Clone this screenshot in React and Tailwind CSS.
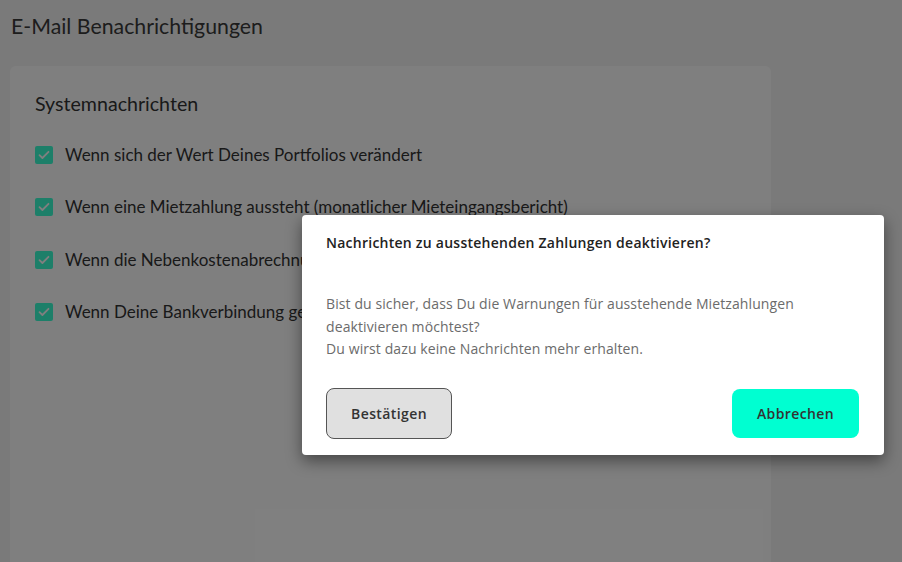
import React from 'react'

const items = [
  'Wenn sich der Wert Deines Portfolios verändert',
  'Wenn eine Mietzahlung aussteht (monatlicher Mieteingangsbericht)',
  'Wenn die Nebenkostenabrechnung verfügbar ist',
  'Wenn Deine Bankverbindung geändert wurde',
]

function Check() {
  return (
    <span className="flex h-[18px] w-[18px] shrink-0 items-center justify-center rounded-[2px] bg-[#3affd2]">
      <svg width="12" height="10" viewBox="0 0 12 10" fill="none">
        <path d="M1.5 5.2 4.4 8 10.5 1.8" stroke="white" strokeWidth="1.8" strokeLinecap="round" strokeLinejoin="round" />
      </svg>
    </span>
  )
}

export default function App() {
  return (
    <div className="relative h-[562px] w-[902px] overflow-hidden bg-[#f5f5f5] font-['Lato',sans-serif] text-[#222]">
      <div className="px-[11px] pt-[13px]">
        <h1 className="text-[21.3px] leading-[26px] text-[#3a3a3a]">E-Mail Benachrichtigungen</h1>

        <div className="mt-[27px] h-[520px] w-[761px] -ml-px rounded-md bg-white px-[25px] pt-[26px]">
          <h2 className="text-[19.6px] leading-6 text-[#333]">Systemnachrichten</h2>
          <ul className="mt-[30px] flex flex-col gap-[34.3px]">
            {items.map((t) => (
              <li key={t} className="flex items-center gap-3 text-[17px] leading-[18px] text-[#333]">
                <Check />
                {t}
              </li>
            ))}
          </ul>
        </div>
      </div>

      {/* overlay */}
      <div className="absolute inset-0 bg-black/50" />

      {/* dialog */}
      <div className="absolute left-[302px] top-[215px] w-[582px] rounded-[4px] bg-white px-6 pt-[19px] pb-[16px] font-['Open_Sans',sans-serif] shadow-[0_6px_16px_rgba(0,0,0,0.45)]">
        <h3 className="text-[14px] font-semibold leading-[18px] tracking-[0.25px] text-[#222]">
          Nachrichten zu ausstehenden Zahlungen deaktivieren?
        </h3>
        <p className="mt-[41px] text-[14px] leading-[22.5px] tracking-[0.1px] text-[#6b6b6b]">
          Bist du sicher, dass Du die Warnungen für ausstehende Mietzahlungen
          <br />
          deaktivieren möchtest?
          <br />
          Du wirst dazu keine Nachrichten mehr erhalten.
        </p>
        <div className="mt-[27px] flex items-center justify-between">
          <button className="h-[51px] w-[126px] rounded-lg border border-[#555] bg-[#e0e0e0] text-[14px] font-semibold tracking-[0.4px] text-[#333]">
            Bestätigen
          </button>
          <button className="mr-px h-[49px] w-[127px] rounded-lg bg-[#00ffd1] text-[14px] font-semibold tracking-[0.4px] text-[#333]">
            Abbrechen
          </button>
        </div>
      </div>
    </div>
  )
}
